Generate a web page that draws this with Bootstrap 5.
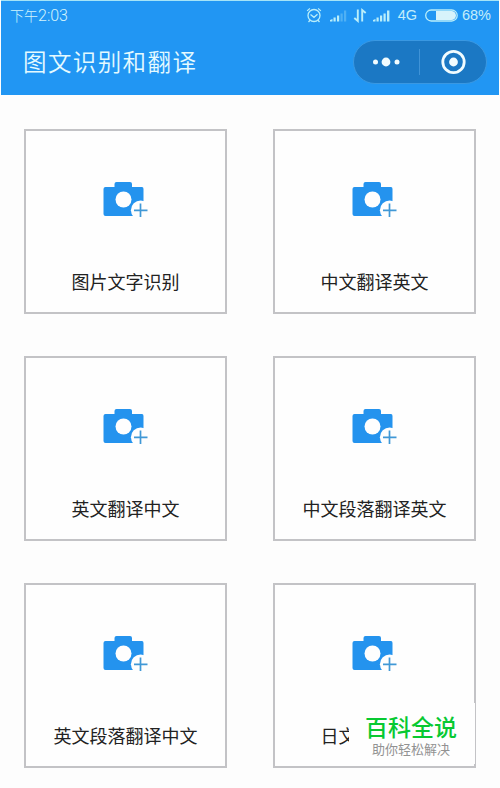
<!DOCTYPE html>
<html lang="zh-CN">
<head>
<meta charset="utf-8">
<meta name="viewport" content="width=device-width, initial-scale=1">
<title>图文识别和翻译</title>
<link href="https://cdn.jsdelivr.net/npm/bootstrap@5.3.0/dist/css/bootstrap.min.css" rel="stylesheet">
<style>
body{font-family:"Noto Sans CJK SC",sans-serif;background:#fdfdfd;height:788px;overflow:hidden}
.app-top{height:95px;margin:0 1px;background:#2196f3;border-top:1px solid #a5e4f7;color:#d9f7ff}
.status{height:29px;padding:0 8px 0 9px;font-size:14px;line-height:29px}
.status-time{font-family:Roboto,"Noto Sans CJK SC",sans-serif;font-size:16px;font-weight:300;color:#d2f4fc}
.status-time span{font-size:14px}
.status-num{font-family:"Liberation Sans",sans-serif;font-size:14.5px;color:#c4eefa}
.title-row{height:64px;padding:0 12px 0 22px}
.app-title{font-size:23.5px;font-weight:350;letter-spacing:1.4px;line-height:35px;color:#e4faff;padding-bottom:2px}
.capsule{width:134px;height:44px;border:1px solid #3a98e2;background:#1b78c4}
.tiles{display:grid;grid-template-columns:203px 203px;column-gap:46px;row-gap:42px;padding:34px 24px 0}
.tile{height:185px;border:2px solid #c3c3c6;border-radius:0;background:#fefefe;padding-top:50px}
.tile-label{font-size:18px;line-height:26px;margin-top:49px;color:#222;white-space:nowrap}
.tile-label-cut{width:108px}
.brand-box{right:-1px;top:118px;width:126px;height:61px;background:#fefefe;padding:10px 2px 0 0}
.brand-name{font-size:23px;font-weight:500;line-height:26px;color:#08c932}
.brand-sub{font-size:13px;line-height:16px;padding-top:2px;color:#929292}
</style>
<script src="https://cdn.jsdelivr.net/npm/bootstrap@5.3.0/dist/js/bootstrap.bundle.min.js"></script>
</head>
<body>
<svg class="d-none">
<symbol id="camera" viewBox="0 0 46 38">
<path d="M11.500 6V3Q11.500 1 13.500 1H27Q29 1 29 3V6H39Q40.500 6 40.500 8V33Q40.500 35 39 35H2.500Q.5 35 .5 33V8Q.5 6 2.500 6Z" fill="#2493ee"/>
<circle cx="20.500" cy="18.500" r="8" fill="#fefefe"/><circle cx="37.700" cy="29.300" r="9.800" fill="#fefefe"/>
<path d="M37.500 22.500V36M31 29.300H44.500" stroke="#4098d6" stroke-width="1.700"/>
</symbol>
</svg>
<header class="app-top">
<div class="status d-flex justify-content-between align-items-center">
<div class="status-time"><span>下午</span>2:03</div>
<div class="d-flex align-items-center">
<svg width="85" height="18" viewBox="0 0 85 18" fill="none" stroke="#b9eefa" stroke-width="1.300">
<circle cx="9" cy="8.500" r="6"/><path d="M5.500 7.500l3.500 2.800L12.500 7.300M2.200 4A8 8 0 0 1 5 1.500M13 1.500a8 8 0 0 1 2.800 2.500M5 13.300l-1.500 1.700M13 13.300l1.500 1.700"/>
<g stroke="none" fill="#b9eefa"><path d="M25 14.500v-1.500l2.500-1v2.500zM28.500 14.500v-4h2.200v4zM32 14.500V8.500h2.200v6zM68 14.500v-1.500l2.500-1v2.500zM71.500 14.500v-4h2.200v4zM75 14.500V8.500h2.200v6zM78.500 14.500V6.500h2.200v8zM82 14.500V3.500h2.400v11z"/><path opacity=".3" d="M35.500 14.500V6.500h2.200v8zM39 14.500V3.500h2.200v11z"/></g>
<path d="M52.800 2.500v11.500l-3.500-3M57.200 14.500V3l3.500 3" stroke-width="1.900"/>
</svg>
<span class="status-num ms-2">4G</span>
<svg class="ms-2 me-1" width="33" height="14" viewBox="0 0 33 14"><rect x=".7" y="1" width="31.500" height="11" rx="5.500" fill="none" stroke="#b9eefa" stroke-width="1.300"/><path d="M11 2H26.500a4.500 4.500 0 0 1 0 9H11z" fill="#d7f3fb"/></svg>
<span class="status-num">68%</span>
</div>
</div>
<div class="title-row d-flex justify-content-between align-items-center">
<h1 class="app-title mb-0">图文识别和翻译</h1>
<div class="capsule rounded-pill">
<svg class="d-block" width="132" height="42" viewBox="0 0 132 42"><g fill="#f1fcff"><circle cx="21.500" cy="21" r="2.500"/><circle cx="32" cy="21" r="4.400"/><circle cx="43" cy="21" r="2.500"/><circle cx="99.500" cy="21" r="4.400"/></g><circle cx="99.500" cy="21" r="10.700" fill="none" stroke="#f1fcff" stroke-width="2.800"/><path d="M65.500 8v26" stroke="#3f93d7"/></svg>
</div>
</div>
</header>
<main class="tiles">
<div class="tile card align-items-center"><svg width="46" height="38"><use href="#camera"/></svg><div class="tile-label">图片文字识别</div></div>
<div class="tile card align-items-center"><svg width="46" height="38"><use href="#camera"/></svg><div class="tile-label">中文翻译英文</div></div>
<div class="tile card align-items-center"><svg width="46" height="38"><use href="#camera"/></svg><div class="tile-label">英文翻译中文</div></div>
<div class="tile card align-items-center"><svg width="46" height="38"><use href="#camera"/></svg><div class="tile-label">中文段落翻译英文</div></div>
<div class="tile card align-items-center"><svg width="46" height="38"><use href="#camera"/></svg><div class="tile-label">英文段落翻译中文</div></div>
<div class="tile card align-items-center"><svg width="46" height="38"><use href="#camera"/></svg><div class="tile-label tile-label-cut">日文</div>
<div class="brand-box position-absolute text-center"><div class="brand-name">百科全说</div><div class="brand-sub">助你轻松解决</div></div></div>
</main>
</body>
</html>
